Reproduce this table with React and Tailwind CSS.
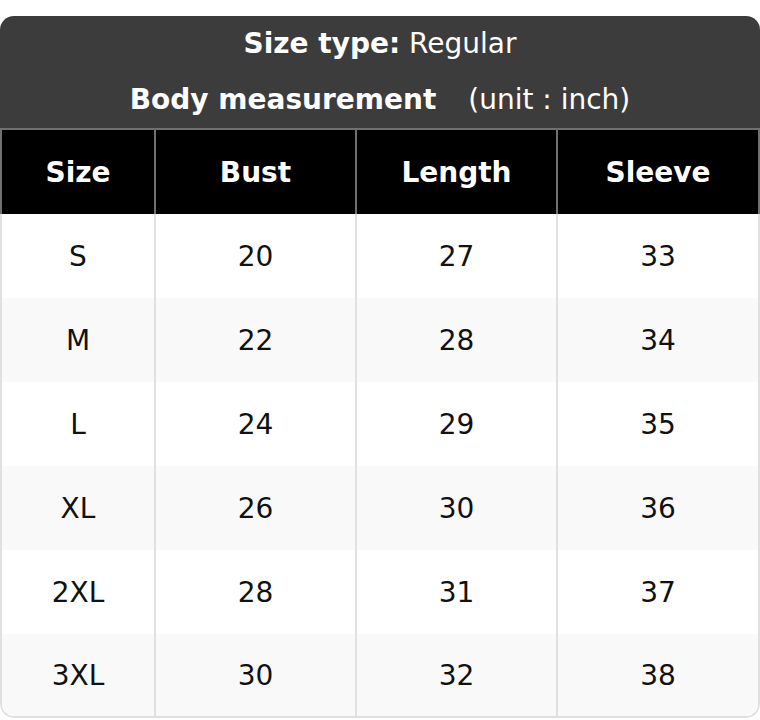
import React from "react";

const rows = [
  ["S", "20", "27", "33"],
  ["M", "22", "28", "34"],
  ["L", "24", "29", "35"],
  ["XL", "26", "30", "36"],
  ["2XL", "28", "31", "37"],
  ["3XL", "30", "32", "38"],
];

export default function App() {
  return (
    <div className="w-[760px] pt-4 bg-white" style={{ fontFamily: '"DejaVu Sans", sans-serif' }}>
      <div className="rounded-[14px] overflow-hidden">
        <div className="bg-[#3c3c3c] text-white text-[28px] text-center">
          <div className="leading-[56px]">
            <span className="font-bold">Size type:</span> Regular
          </div>
          <div className="leading-[56px]">
            <span className="font-bold">Body measurement</span>
            <span className="ml-[32px]">(unit : inch)</span>
          </div>
        </div>
        <div className="grid grid-cols-[152px_201px_201px_1fr] bg-black text-white font-bold text-[28px] border-x-2 border-t-2 border-[#707070] h-[86px]">
          {["Size", "Bust", "Length", "Sleeve"].map((h, i) => (
            <div
              key={h}
              className={
                "flex items-center justify-center pt-[2px] " +
                (i > 0 ? "border-l-2 border-[#707070]" : "")
              }
            >
              {h}
            </div>
          ))}
        </div>
        <div className="border-x-2 border-b-2 border-[#e0e0e0] rounded-b-[14px] overflow-hidden">
          {rows.map((r, ri) => (
            <div
              key={ri}
              className={
                "grid grid-cols-[152px_201px_201px_1fr] text-[28px] text-[#111111] " +
                (ri === rows.length - 1 ? "h-[82px] " : "h-[84px] ") +
                (ri % 2 === 1 ? "bg-[#f9f9f9]" : "bg-white")
              }
            >
              {r.map((c, ci) => (
                <div
                  key={ci}
                  className={
                    "flex items-center justify-center pt-[2px] " +
                    (ci > 0 ? "border-l-2 border-[#e0e0e0]" : "")
                  }
                >
                  {c}
                </div>
              ))}
            </div>
          ))}
        </div>
      </div>
    </div>
  );
}
